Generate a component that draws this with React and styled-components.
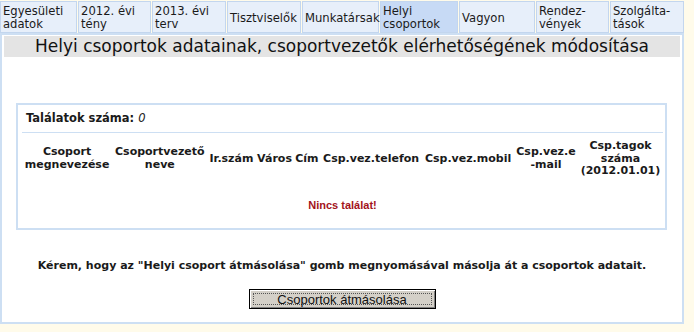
import React from "react";
import styled, { createGlobalStyle } from "styled-components";

const Global = createGlobalStyle`
  html, body { margin: 0; padding: 0; background: #fffbea; }
  body { font-family: "DejaVu Sans", Verdana, sans-serif; color: #1a1a1a; }
`;

const Page = styled.div`
  width: 684px;
`;

const TabBar = styled.div`
  display: flex;
  height: 33px;
  padding-top: 1px;
  box-sizing: border-box;
  background: #fffbea;
`;

const Tab = styled.div`
  box-sizing: border-box;
  flex: 0 0 ${(p) => p.$w}px;
  min-width: 0;
  height: 32px;
  padding: 2px 0 0 2px;
  border: 1px solid #c3d6ee;
  margin-right: 1px;
  background: ${(p) => (p.$active ? "#c7daf5" : "#e7effa")};
  font-size: 11.6px;
  line-height: 13px;
  display: flex;
  align-items: center;
  color: #1a1a1a;
  white-space: nowrap;
  &:last-child { margin-right: 0; }
`;

const Panel = styled.div`
  border: 2px solid #cddff3;
  padding: 1px 2px 0 2px;
  background: #fff;
  height: 291px;
  box-sizing: border-box;
`;

const TitleBar = styled.div`
  height: 21px;
  background: #e4e4e4;
  font-size: 17px;
  line-height: 21px;
  text-align: center;
  color: #111;
`;

const ResultBox = styled.div`
  margin: 46px 13px 0 12px;
  border: 2px solid #cddff3;
  padding: 0 2px 0 4px;
  height: 127px;
  box-sizing: border-box;
`;

const CountRow = styled.div`
  font-size: 11.5px;
  font-weight: bold;
  line-height: 14px;
  padding: 6px 0 7px 4px;
  border-bottom: 1px solid #cddff3;
  em { font-weight: normal; font-style: italic; }
`;

const Table = styled.table`
  width: 100%;
  border-collapse: collapse;
  margin-top: 6px;
`;

const Th = styled.th`
  font-size: 11px;
  font-weight: bold;
  line-height: 12.5px;
  padding: 1px 1px;
  text-align: center;
  vertical-align: middle;
  color: #1a1a1a;
`;

const Empty = styled.td`
  text-align: center;
  padding-top: 20px;
  font-family: "Liberation Sans", Arial, sans-serif;
  font-size: 11px;
  font-weight: bold;
  color: #a3131b;
`;

const Note = styled.div`
  margin-top: 29px;
  text-align: center;
  font-size: 11px;
  font-weight: bold;
  line-height: 14px;
`;

const ButtonRow = styled.div`
  display: flex;
  justify-content: center;
  margin-top: 16px;
`;

const Button = styled.button`
  width: 187px;
  height: 20px;
  padding: 0;
  background: #d4d0c8;
  border: 1px solid #000;
  box-shadow: inset 1px 1px 0 #fff, inset -1px -1px 0 #808080;
  font-family: "Liberation Sans", Arial, sans-serif;
  font-size: 13px;
  color: #111;
  display: flex;
  align-items: stretch;
  justify-content: stretch;
  span {
    flex: 1;
    margin: 3px;
    border: 1px dotted #555;
    line-height: 11px;
    display: flex;
    align-items: center;
    justify-content: center;
  }
`;

const tabs = [
  { label: ["Egyesületi", "adatok"], w: 77 },
  { label: ["2012. évi", "tény"], w: 73 },
  { label: ["2013. évi", "terv"], w: 74 },
  { label: ["Tisztviselők"], w: 74 },
  { label: ["Munkatársak"], w: 77 },
  { label: ["Helyi", "csoportok"], w: 78, active: true },
  { label: ["Vagyon"], w: 76 },
  { label: ["Rendez-", "vények"], w: 73 },
  { label: ["Szolgálta-", "tások"], w: 74 },
];

const headers = [
  ["Csoport", "megnevezése"],
  ["Csoportvezető", "neve"],
  ["Ir.szám"],
  ["Város"],
  ["Cím"],
  ["Csp.vez.telefon"],
  ["Csp.vez.mobil"],
  ["Csp.vez.e", "-mail"],
  ["Csp.tagok", "száma", "(2012.01.01)"],
];

export default function App() {
  return (
    <Page>
      <Global />
      <TabBar>
        {tabs.map((t, i) => (
          <Tab key={i} $w={t.w} $active={t.active}>
            <div>
              {t.label.map((l, j) => (
                <React.Fragment key={j}>
                  {j > 0 && <br />}
                  {l}
                </React.Fragment>
              ))}
            </div>
          </Tab>
        ))}
      </TabBar>
      <Panel>
        <TitleBar>Helyi csoportok adatainak, csoportvezetők elérhetőségének módosítása</TitleBar>
        <ResultBox>
          <CountRow>
            Találatok száma: <em>0</em>
          </CountRow>
          <Table>
            <thead>
              <tr>
                {headers.map((h, i) => (
                  <Th key={i}>
                    {h.map((l, j) => (
                      <React.Fragment key={j}>
                        {j > 0 && <br />}
                        {l}
                      </React.Fragment>
                    ))}
                  </Th>
                ))}
              </tr>
            </thead>
            <tbody>
              <tr>
                <Empty colSpan={9}>Nincs találat!</Empty>
              </tr>
            </tbody>
          </Table>
        </ResultBox>
        <Note>
          Kérem, hogy az "Helyi csoport átmásolása" gomb megnyomásával másolja át a csoportok adatait.
        </Note>
        <ButtonRow>
          <Button>
            <span>Csoportok átmásolása</span>
          </Button>
        </ButtonRow>
      </Panel>
    </Page>
  );
}
